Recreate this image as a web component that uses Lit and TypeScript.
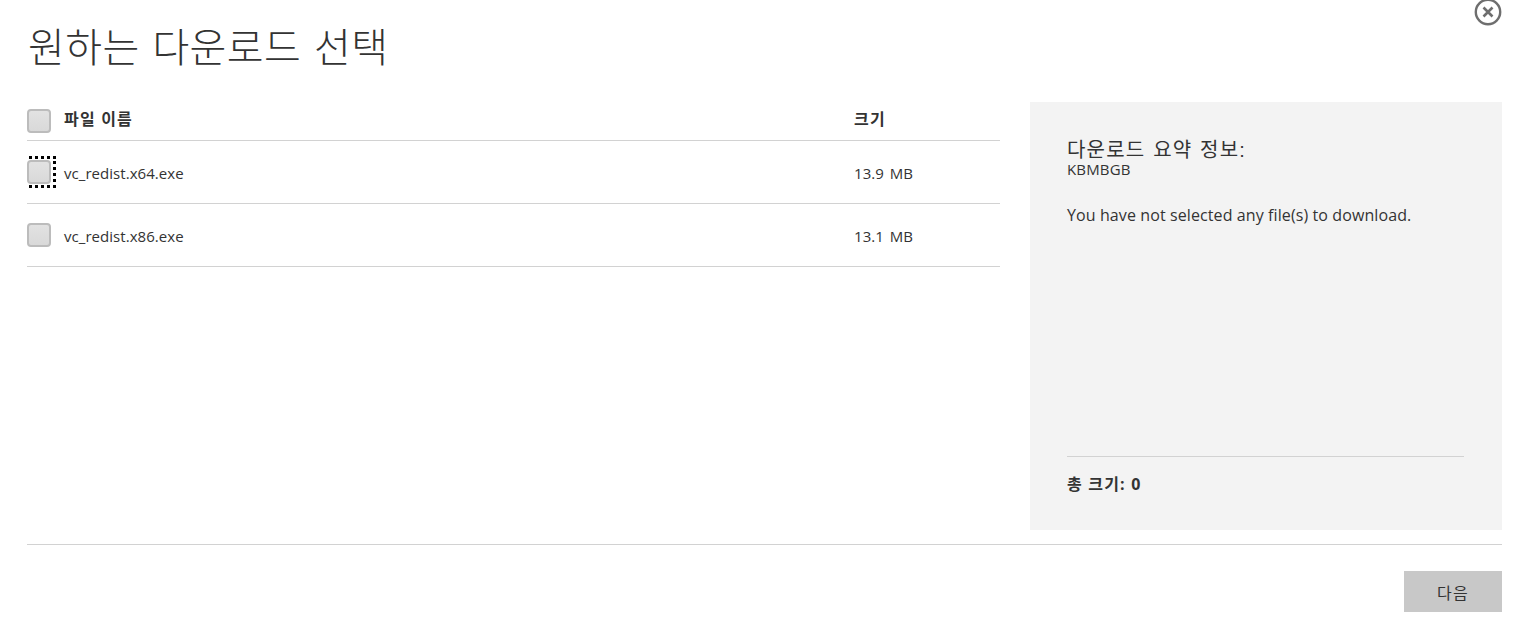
import { LitElement, css, html } from "lit";
import { customElement, state } from "lit/decorators.js";

interface DownloadFile {
  name: string;
  size: string;
}

@customElement("app-root")
export class AppRoot extends LitElement {
  @state()
  files: DownloadFile[] = [
    { name: "vc_redist.x64.exe", size: "13.9 MB" },
    { name: "vc_redist.x86.exe", size: "13.1 MB" },
  ];

  render() {
    return html`
      <div class="dialog">
        <button class="close" aria-label="닫기">
          <svg width="28" height="28" viewBox="0 0 28 28">
            <circle cx="14" cy="13" r="12.2" fill="none" stroke="#6e6e6e" stroke-width="2.4"></circle>
            <path d="M9.500 8.500l9 9M18.500 8.500l-9 9" fill="none" stroke="#6e6e6e" stroke-width="2.600"></path>
          </svg>
        </button>
        <h1>원하는 다운로드 선택</h1>
        <div class="body">
          <div class="list">
            <div class="row head">
              <span class="check"></span>
              <span class="name">파일 이름</span>
              <span class="size">크기</span>
            </div>
            ${this.files.map(
              (f, i) => html`
                <div class="row">
                  <span class="check-wrap ${i === 0 ? "focused" : ""}"><span class="check"></span></span>
                  <span class="name">${f.name}</span>
                  <span class="size">${f.size}</span>
                </div>
              `
            )}
          </div>
          <aside class="summary">
            <div class="summary-top">
              <div class="summary-title">다운로드 요약 정보:</div>
              <div class="summary-sub">KBMBGB</div>
              <p>You have not selected any file(s) to download.</p>
            </div>
            <div class="total">총 크기: 0</div>
          </aside>
        </div>
        <div class="footer">
          <button class="next">다음</button>
        </div>
      </div>
    `;
  }

  static styles = css`
    :host {
      display: block;
      height: 627px;
      overflow: hidden;
      background: #fff;
      color: #333;
      font-family: "Open Sans", "Noto Sans CJK KR", sans-serif;
    }

    .dialog {
      position: relative;
      box-sizing: border-box;
      height: 627px;
      padding: 0 22px 0 27px;
    }

    .close {
      position: absolute;
      top: -1px;
      right: 22px;
      width: 28px;
      height: 28px;
      padding: 0;
      border: 0;
      background: none;
    }

    h1 {
      margin: 0;
      height: 102px;
      box-sizing: border-box;
      padding: 18px 0 0 1px;
      font-size: 40px;
      line-height: 58px;
      font-weight: 300;
      letter-spacing: 0.4px;
      word-spacing: 2px;
      color: #333;
    }

    .body {
      display: flex;
      justify-content: space-between;
      height: 428px;
    }

    .list {
      width: 973px;
    }

    .row {
      display: flex;
      align-items: center;
      height: 62px;
      border-bottom: 1px solid #d2d2d2;
      font-size: 15px;
      letter-spacing: 0.05px;
      word-spacing: 2px;
    }

    .row .name,
    .row .size {
      position: relative;
      top: 1px;
    }

    .row.head {
      height: 38px;
      font-weight: 700;
      font-size: 16px;
      line-height: 18px;
      letter-spacing: 1.2px;
      word-spacing: 0;
    }

    .row.head .name,
    .row.head .size {
      top: -2px;
    }

    .check-wrap {
      position: relative;
      display: block;
      width: 24px;
      height: 24px;
      flex: none;
    }

    .check-wrap.focused::before {
      content: "";
      position: absolute;
      box-sizing: border-box;
      left: 2px;
      top: -4px;
      width: 27px;
      height: 32px;
      border: 3px dotted #000;
    }

    .check {
      position: relative;
      display: block;
      box-sizing: border-box;
      width: 24px;
      height: 24px;
      flex: none;
      border: 2px solid #bcbcbc;
      border-radius: 4px;
      background: linear-gradient(#e2e2e2, #d9d9d9);
    }

    .name {
      margin-left: 13px;
      width: 790px;
    }

    .summary {
      display: flex;
      flex-direction: column;
      justify-content: space-between;
      box-sizing: border-box;
      width: 472px;
      padding: 37px 38px 36px 37px;
      background: #f3f3f3;
    }

    .summary-title {
      font-family: "Liberation Sans", "Noto Sans CJK KR", sans-serif;
      font-size: 20px;
      line-height: 23px;
      letter-spacing: 1.2px;
      word-spacing: 1px;
    }

    .summary-sub {
      margin-top: -2px;
      font-size: 15px;
      line-height: 19px;
      letter-spacing: 0.15px;
    }

    .summary p {
      margin: 25px 0 0;
      font-size: 16px;
      line-height: 22px;
      letter-spacing: 0.1px;
    }

    .total {
      border-top: 1px solid #d2d2d2;
      padding-top: 17px;
      font-size: 16px;
      line-height: 20px;
      font-weight: 700;
      letter-spacing: 1.2px;
    }

    .footer {
      display: flex;
      justify-content: flex-end;
      margin-top: 14px;
      padding-top: 26px;
      border-top: 1px solid #d2d2d2;
    }

    .next {
      width: 98px;
      height: 41px;
      border: 0;
      padding: 0;
      background: #c8c8c8;
      color: #333;
      font: inherit;
      font-size: 16px;
      letter-spacing: 1.2px;
    }
  `;
}

declare global {
  interface HTMLElementTagNameMap {
    "app-root": AppRoot;
  }
}
